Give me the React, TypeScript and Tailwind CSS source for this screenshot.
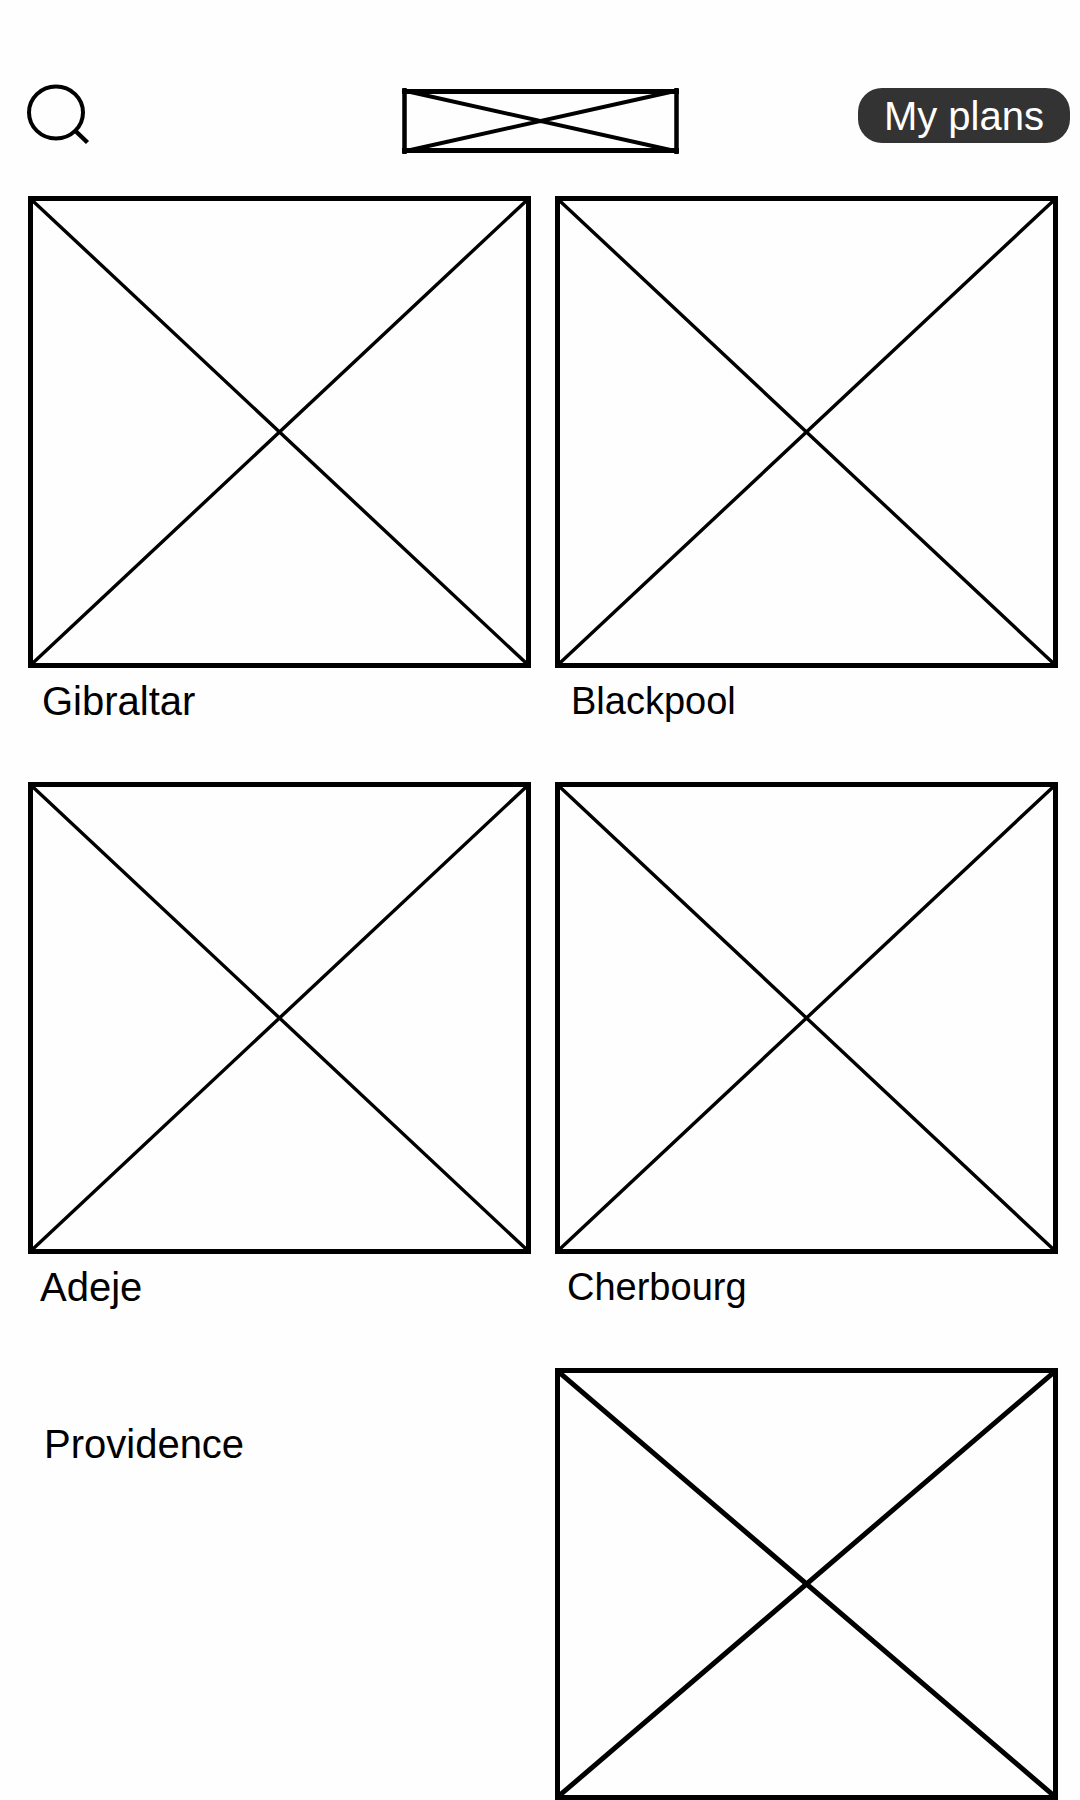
type Place = {
  name: string;
  labelClass: string;
};

const places: Place[] = [
  { name: "Gibraltar", labelClass: "pl-3.5 text-[40px]" },
  { name: "Blackpool", labelClass: "pl-4 text-[38px]" },
  { name: "Adeje", labelClass: "pl-3 text-[40px]" },
  { name: "Cherbourg", labelClass: "pl-3 text-[38px]" },
];

/** Crossed box that stands in for a photo; it fills its parent's width. */
function Placeholder({ shape, stroke }: { shape: string; stroke: number }) {
  return (
    <div className={`${shape} w-full border-[5px] border-black`}>
      <svg
        className="block h-full w-full overflow-visible"
        viewBox="0 0 100 100"
        preserveAspectRatio="none"
        aria-hidden="true"
      >
        <path
          d="M-0.4 -0.4 L100.4 100.4 M100.4 -0.4 L-0.4 100.4"
          stroke="black"
          strokeWidth={stroke}
          vectorEffect="non-scaling-stroke"
          fill="none"
        />
      </svg>
    </div>
  );
}

function SearchIcon() {
  return (
    <svg
      className="block h-[60px] w-16 overflow-visible"
      viewBox="0 0 64 60"
      fill="none"
      stroke="black"
      strokeWidth="4"
      aria-hidden="true"
    >
      <ellipse cx="28" cy="28.5" rx="27" ry="26" />
      <path d="M47.5 47 L59.5 58.5" strokeWidth="4.5" />
    </svg>
  );
}

function Logo() {
  return (
    <svg
      className="block h-[66px] w-[277px]"
      viewBox="0 0 277 66"
      fill="none"
      stroke="black"
      role="img"
      aria-label="Logo"
    >
      <path d="M0 3.5 H277 M0 62.5 H277" strokeWidth="5" />
      <path d="M2.5 0 V66 M274.5 0 V66" strokeWidth="4.5" />
      <path d="M4 3 L273 63 M273 3 L4 63" strokeWidth="4" />
    </svg>
  );
}

export default function App() {
  return (
    <div className="bg-[#fefefe] font-['Liberation_Sans',Arial,sans-serif] text-black">
      <header className="grid grid-cols-[1fr_auto_1fr] items-start pt-[84px] pb-[42px]">
        <button type="button" aria-label="Search" className="ml-7 justify-self-start">
          <SearchIcon />
        </button>
        <a href="#home" className="mt-1 block">
          <Logo />
        </a>
        <button
          type="button"
          className="mt-1 mr-2.5 h-[55px] justify-self-end rounded-[24px] bg-[#333333] px-[26px] text-[40px] leading-[54px] text-white"
        >
          My plans
        </button>
      </header>

      <main className="grid grid-cols-2 gap-x-6 pr-[22px] pl-7">
        {places.map((place) => (
          <figure key={place.name}>
            <Placeholder shape="aspect-[503/472]" stroke={3.4} />
            <figcaption className={`${place.labelClass} pt-[9px] pb-[57px] leading-[48px]`}>
              {place.name}
            </figcaption>
          </figure>
        ))}
        <p className="pt-[52px] pl-4 text-[40px] leading-[48px]">Providence</p>
        <Placeholder shape="aspect-[503/432]" stroke={5} />
      </main>
    </div>
  );
}
